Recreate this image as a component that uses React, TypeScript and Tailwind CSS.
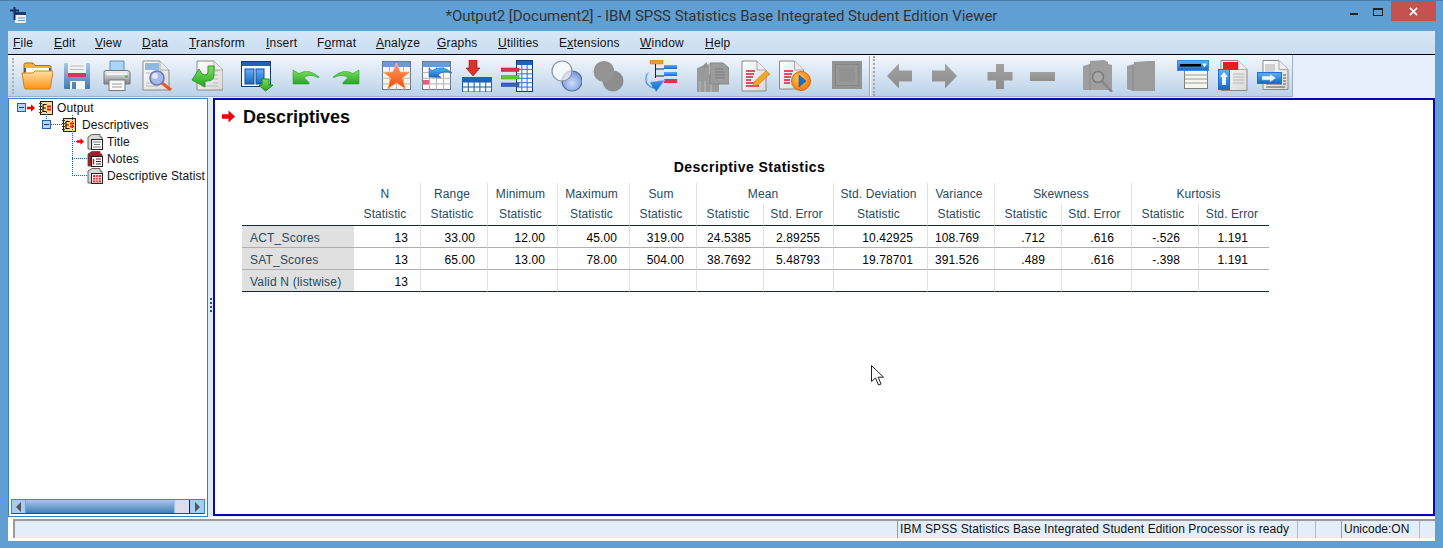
import React from "react";

const S = ({ children, cls = "w-8 h-8", vb = "0 0 32 32" }: { children: React.ReactNode; cls?: string; vb?: string }) => (
  <svg viewBox={vb} className={`flex-none ${cls}`}>{children}</svg>
);

const Defs = () => (
  <svg className="absolute w-0 h-0">
    <defs>
      <linearGradient id="gOr" x1="0" y1="0" x2="0" y2="1"><stop offset="0" stopColor="#ffe0a8" /><stop offset="1" stopColor="#ff9412" /></linearGradient>
      <linearGradient id="gBl" x1="0" y1="0" x2="0" y2="1"><stop offset="0" stopColor="#a8c8e6" /><stop offset="1" stopColor="#3f7bb0" /></linearGradient>
      <linearGradient id="gGr" x1="0" y1="0" x2="0" y2="1"><stop offset="0" stopColor="#7de05a" /><stop offset="1" stopColor="#28a428" /></linearGradient>
      <linearGradient id="gPr" x1="0" y1="0" x2="0" y2="1"><stop offset="0" stopColor="#f4f4f4" /><stop offset="1" stopColor="#7f8487" /></linearGradient>
      <linearGradient id="gPg" x1="0" y1="0" x2="1" y2="1"><stop offset="0" stopColor="#ffffff" /><stop offset="1" stopColor="#d8d8d8" /></linearGradient>
      <linearGradient id="gSt" x1="0" y1="0" x2="0" y2="1"><stop offset="0" stopColor="#ffa060" /><stop offset="1" stopColor="#f04a08" /></linearGradient>
      <linearGradient id="gHd" x1="0" y1="0" x2="0" y2="1"><stop offset="0" stopColor="#5fb0f5" /><stop offset="1" stopColor="#1468c8" /></linearGradient>
      <linearGradient id="gGy" x1="0" y1="0" x2="0" y2="1"><stop offset="0" stopColor="#a2a2a2" /><stop offset="1" stopColor="#8c8c8c" /></linearGradient>
      <radialGradient id="gV" cx="0.5" cy="0.6" r="0.6"><stop offset="0" stopColor="#cfdcf8" /><stop offset="1" stopColor="#6f96dc" /></radialGradient>
      <radialGradient id="gPl" cx="0.4" cy="0.35" r="0.7"><stop offset="0" stopColor="#ffc060" /><stop offset="1" stopColor="#ee7a08" /></radialGradient>
    </defs>
  </svg>
);

const Page = ({ x = 1, y = 1, w = 26, h = 29 }: { x?: number; y?: number; w?: number; h?: number }) => (
  <g>
    <path d={`M${x} ${y}H${x + w - 9}L${x + w} ${y + 9}V${y + h}H${x}Z`} fill="url(#gPg)" stroke="#8a8a8a" strokeWidth="1" />
    <path d={`M${x + w - 9} ${y}V${y + 9}H${x + w}`} fill="#eeeeee" stroke="#a8a8a8" strokeWidth="1" />
  </g>
);

const TableGrid = ({ x, y, w, h, cols, rows, c = "#1a5fb0" }: { x: number; y: number; w: number; h: number; cols: number; rows: number; c?: string }) => (
  <g stroke={c} strokeWidth="1">
    {Array.from({ length: cols - 1 }).map((_, i) => <line key={"c" + i} x1={x + ((i + 1) * w) / cols} x2={x + ((i + 1) * w) / cols} y1={y} y2={y + h} />)}
    {Array.from({ length: rows - 1 }).map((_, i) => <line key={"r" + i} y1={y + ((i + 1) * h) / rows} y2={y + ((i + 1) * h) / rows} x1={x} x2={x + w} />)}
  </g>
);

const Folder = () => (
  <S>
    <path d="M3 7V4.5Q3 3 4.500 3H12L14 5.500H28Q30 5.500 30 7V13H3Z" fill="#f7b23e" stroke="#a8700e" />
    <path d="M3 8H30V12H3Z" fill="#2f62ac" />
    <path d="M5 8H28V14H5Z" fill="#fff" />
    <path d="M1 13L12 13L14 11H32L29.500 27.500Q29.300 29 28 29H5Q3.500 29 3.300 27.500Z" fill="url(#gOr)" stroke="#cf7f14" />
  </S>
);
const Save = () => (
  <S>
    <path d="M4 3H28Q29 3 29 4V28Q29 29 28 29H4Q3 29 3 28V4Q3 3 4 3Z" fill="url(#gBl)" />
    <rect x="7" y="3" width="18" height="14" fill="#f2f2f2" />
    <rect x="7" y="13" width="18" height="4" fill="#d8355c" />
    <path d="M9 6H23M9 9.500H23" stroke="#b4bcc8" />
    <rect x="9" y="21" width="15" height="8" fill="#f4f6f8" />
    <rect x="11" y="22" width="4" height="7" fill="#4f86b8" />
  </S>
);
const Print = () => (
  <S>
    <path d="M9 1H23V13H9Z" fill="#a9d6f8" stroke="#6d8ea8" />
    <path d="M3 12Q3 10.500 6 10.500H26Q29 10.500 29 13V24H3Z" fill="url(#gPr)" stroke="#70767a" />
    <rect x="6" y="13" width="20" height="2" fill="#fff" opacity="0.7" />
    <rect x="24" y="15.500" width="3" height="2" fill="#52c04a" />
    <rect x="8" y="20" width="16" height="10.500" fill="#fafafa" stroke="#777" />
    <path d="M11 24H21M11 27H21" stroke="#9a9a9a" />
  </S>
);
const Preview = () => (
  <S>
    <Page />
    <rect x="3" y="3" width="14" height="7" fill="#8fb9e0" />
    <path d="M4 13H12M4 23H10M4 26H16" stroke="#b8b8b8" />
    <path d="M20 23L29 30" stroke="#e2582a" strokeWidth="3" />
    <circle cx="15" cy="18" r="7" fill="#a8b8ec" stroke="#6b7aa8" strokeWidth="1.600" />
    <circle cx="13" cy="16" r="3" fill="#e0e8fc" />
  </S>
);
const Recall = () => (
  <S>
    <Page x={6} y={1} w={26} h={29} />
    <path d="M17 11H27M20 15H27M22 19H27M22 23H27M10 26H27" stroke="#b8b8b8" />
    <path d="M17 6H23V15Q23 21 16 21H14V27L1 20L8 9L11 14L14 15Q17 15 17 12Z" fill="url(#gGr)" stroke="#2c9a2c" />
  </S>
);
const GoTo = () => (
  <S>
    <rect x="0.500" y="1.500" width="29" height="25" fill="#f6f9fd" stroke="#143a78" />
    <rect x="1" y="2" width="28" height="4" fill="#1f62b8" />
    <rect x="4" y="9" width="9" height="15" fill="url(#gHd)" stroke="#145090" />
    <rect x="15" y="9" width="8" height="15" fill="url(#gHd)" stroke="#145090" />
    <path d="M21 19H28V25H32L24.500 31L18 25H21Z" fill="url(#gGr)" stroke="#1a8a1a" />
  </S>
);
const Undo = () => (
  <S>
    <path d="M3 10L9 13.500Q19 8 29 17Q29 17.500 28 17.500Q20 13.500 14 17.500L19 22.500V24H3Z" fill="url(#gGr)" stroke="#28a030" strokeWidth="0.600" />
  </S>
);
const Redo = () => (
  <S>
    <g transform="matrix(-1 0 0 1 32 0)">
      <path d="M3 10L9 13.500Q19 8 29 17Q29 17.500 28 17.500Q20 13.500 14 17.500L19 22.500V24H3Z" fill="url(#gGr)" stroke="#28a030" strokeWidth="0.600" />
    </g>
  </S>
);
const StarT = () => (
  <S>
    <rect x="1.500" y="1.500" width="28" height="28" fill="#f8f4ec" stroke="#6a7a8a" />
    <rect x="2" y="2" width="27" height="5" fill="#6a9ad8" />
    <TableGrid x={1.500} y={7} w={28} h={22.500} cols={4} rows={4} c="#b8b8b8" />
    <path d="M15.500 3L19.500 12H29L21.500 18L24.500 29L15.500 23L6.500 29L9.500 18L2 12H11.500Z" fill="url(#gSt)" stroke="#f8c8a0" strokeWidth="0.700" />
  </S>
);
const ReT = () => (
  <S>
    <rect x="1.500" y="1.500" width="28" height="28" fill="#fbfbfb" stroke="#6a7a8a" />
    <rect x="2" y="2" width="27" height="5" fill="#6a9ad8" />
    <TableGrid x={1.500} y={7} w={28} h={22.500} cols={4} rows={4} c="#b4b4b4" />
    <rect x="2" y="20" width="6" height="4.500" fill="#ee5a78" />
    <path d="M8 17V8L11 10.500Q21 4 31 13Q22 10 17 15L20 17.500Z" fill="url(#gHd)" stroke="#145090" strokeWidth="0.500" />
  </S>
);
const InsT = () => (
  <S>
    <path d="M8 0H16V8H19L12 16L5 8H8Z" fill="#d8342c" stroke="#8a1c14" strokeWidth="0.600" />
    <rect x="1" y="17" width="30" height="5" fill="#1f62b8" />
    <rect x="1.500" y="22" width="29" height="10" fill="#f2f8ff" stroke="#1a5fb0" />
    <TableGrid x={1.500} y={22} w={29} h={10} cols={5} rows={2} />
  </S>
);
const Vars = () => (
  <S>
    <rect x="15.500" y="0.500" width="16" height="31" fill="#f2f8ff" stroke="#143a78" />
    <rect x="16" y="1" width="15" height="4" fill="#1f62b8" />
    <TableGrid x={15.500} y={5} w={16} h={26.500} cols={3} rows={6} c="#2a78d0" />
    <rect x="0" y="8" width="18" height="3.500" fill="#d8344c" stroke="#a82030" strokeWidth="0.500" />
    <rect x="0" y="15.500" width="18" height="3.500" fill="#66c43a" stroke="#3e9a20" strokeWidth="0.500" />
    <rect x="0" y="23" width="18" height="3.500" fill="#3a5fd0" stroke="#1e3a9a" strokeWidth="0.500" />
  </S>
);
const Venn = () => (
  <S>
    <circle cx="22" cy="21" r="10" fill="url(#gV)" stroke="#5a6f92" strokeWidth="1.200" />
    <circle cx="12" cy="11" r="10" fill="#ffffff" fillOpacity="0.650" stroke="#8a92a0" strokeWidth="1.200" />
  </S>
);
const VennG = () => (
  <S>
    <circle cx="21" cy="21" r="10.500" fill="#8e8e8e" />
    <circle cx="12" cy="11.500" r="10.500" fill="#949494" />
  </S>
);
const TreeI = () => (
  <S>
    <rect x="5" y="0" width="13" height="4" fill="#f09a28" stroke="#c87a10" strokeWidth="0.500" />
    <path d="M10.500 4V18M10.500 9H19M10.500 16H19" stroke="#222" strokeWidth="1" fill="none" />
    <rect x="19" y="5" width="13" height="4" fill="url(#gHd)" />
    <rect x="19" y="12" width="13" height="4" fill="url(#gHd)" />
    <rect x="19" y="19" width="13" height="4" fill="#d8344c" />
    <path d="M4 12Q-2 22 7 27L5 22L20 20L11 32L9.500 29Q-3 26 1 14Z" fill="url(#gHd)" stroke="#a8d0f5" strokeWidth="0.600" />
  </S>
);
const GrayDoc = () => (
  <S>
    <path d="M0 14V32H22V13L16 12L14 16L12 14V4L0 8Z" fill="#9a9a9a" />
    <path d="M3 8L10 2V8Z" fill="#8f8f8f" />
    <path d="M13 3H26L32 8V24H13Z" fill="#9b9b9b" stroke="#878787" />
    <path d="M18 9H26M18 12H28M18 15H28M18 18H28" stroke="#7c7c7c" />
    <path d="M3 21V32M8 21V32M14 24V32" stroke="#bdbdbd" strokeWidth="1" />
  </S>
);
const PenDoc = () => (
  <S>
    <Page x={2} y={1} w={24} h={30} />
    <path d="M6 11H15M6 14H14M6 17H13M6 20H11M6 23H18M6 26H19" stroke="#d41c38" strokeWidth="1.700" />
    <path d="M14 22L26 11L30 14L18 25L13 26Z" fill="#f5a623" stroke="#b87a18" strokeWidth="0.600" />
  </S>
);
const PlayDoc = () => (
  <S>
    <Page x={0.500} y={1} w={24} h={28} />
    <path d="M5 11H14M5 14H13M5 17H12M5 20H11M5 23H11" stroke="#d41c38" strokeWidth="1.700" />
    <circle cx="22" cy="21" r="9.500" fill="url(#gPl)" stroke="#d06c08" />
    <path d="M20 15L27 21L20 27Z" fill="#1f6ec8" stroke="#154a90" strokeWidth="0.500" />
  </S>
);
const Frame = () => (
  <S>
    <rect x="1" y="1" width="30" height="28" fill="#939393" />
    <rect x="4.500" y="4.500" width="23" height="21" fill="#989898" stroke="#858585" />
    <rect x="8" y="8" width="16" height="14" fill="#929292" />
  </S>
);
const ArrowL = () => <S><path d="M3 16L15 3.500V10.500H28V21.500H15V28.500Z" fill="url(#gGy)" /></S>;
const ArrowR = () => <S><path d="M29 16L17 3.500V10.500H4V21.500H17V28.500Z" fill="url(#gGy)" /></S>;
const Plus = () => <S><path d="M12 4H20V12H28.500V20.500H20V29H12V20.500H3.500V12H12Z" fill="url(#gGy)" /></S>;
const Minus = () => <S><rect x="3" y="12" width="25" height="9" fill="url(#gGy)" /></S>;
const GrayMag = () => (
  <S>
    <path d="M1 6L8 4V1L22 0L26 2V4L30 5V30H1Z" fill="#9e9e9e" />
    <path d="M8 4V30" stroke="#8a8a8a" />
    <circle cx="16" cy="17" r="5.500" fill="#a8a8a8" stroke="#7a7a7a" strokeWidth="1.500" />
    <path d="M20 21L30 32" stroke="#868686" strokeWidth="2.500" />
  </S>
);
const GrayBook = () => (
  <S>
    <path d="M2 6L9 4V2L24 1H30V31H8L2 29Z" fill="#9c9c9c" />
    <path d="M8 6V31" stroke="#888888" />
  </S>
);
const ListI = () => (
  <S>
    <rect x="7.500" y="6" width="23" height="22.500" fill="#f6f6f0" stroke="#808080" />
    <path d="M8 15H30M8 19H30M8 23H30" stroke="#9a9a9a" />
    <rect x="0.500" y="0.500" width="31" height="10" fill="url(#gHd)" stroke="#3a8ae0" />
    <rect x="3" y="4" width="21" height="2.500" fill="#000" />
    <path d="M25 3.500H30L27.500 7.500Z" fill="#e8f2ff" />
  </S>
);
const UpDoc = () => (
  <S>
    <Page x={3} y={0.500} w={26} h={30} />
    <rect x="5" y="2" width="15" height="8" fill="#d8241c" />
    <path d="M15 14H26M15 17H26M15 20H26M15 23H26" stroke="#b8b8b8" />
    <rect x="0.500" y="9.500" width="11" height="20" fill="url(#gHd)" stroke="#1a70e0" />
    <path d="M6 12L10 17H8V25H4V17H2Z" fill="#e8f4ff" />
  </S>
);
const RightDoc = () => (
  <S>
    <Page x={6} y={0.500} w={25} h={29} />
    <path d="M8 4H18V14H8Z" fill="#d0d0d0" />
    <path d="M26 15H29M26 18H29M26 21H29M26 24H29M9 24H25M9 27H28" stroke="#555" />
    <rect x="0.500" y="12.500" width="24" height="11" fill="url(#gHd)" stroke="#1a70e0" />
    <path d="M5 16H13V14L19 18L13 22V20H5Z" fill="#e8f4ff" stroke="#7aa8d8" strokeWidth="0.500" />
  </S>
);

const Sep = () => (
  <div className="h-[40px] w-[6px] ml-[6px] flex flex-none">
    <div className="w-[1px] h-full bg-[#8fa6bc]" />
    <div className="w-[1px] h-full bg-white" />
    <div className="w-[2px] ml-[2px] h-full border-l-2 border-dotted border-[#a6a6a6]" />
  </div>
);

const tools: { c: string; I: React.FC }[] = [
  { c: "ml-[7px]", I: Folder }, { c: "ml-[8px]", I: Save }, { c: "ml-[8px]", I: Print }, { c: "ml-[9px]", I: Preview },
  { c: "ml-[17px]", I: Recall }, { c: "ml-[18px]", I: GoTo }, { c: "ml-[17px]", I: Undo }, { c: "ml-[8px]", I: Redo },
  { c: "ml-[19px]", I: StarT }, { c: "ml-[8px]", I: ReT }, { c: "ml-[8px]", I: InsT }, { c: "ml-[8px]", I: Vars },
  { c: "ml-[17px]", I: Venn }, { c: "ml-[10px]", I: VennG }, { c: "ml-[21px]", I: TreeI }, { c: "ml-[20px]", I: GrayDoc },
  { c: "ml-[11px]", I: PenDoc }, { c: "ml-[7px]", I: PlayDoc }, { c: "ml-[20px]", I: Frame },
];
const tools2: { c: string; I: React.FC }[] = [
  { c: "ml-[9px]", I: ArrowL }, { c: "ml-[12px]", I: ArrowR }, { c: "ml-[24px]", I: Plus }, { c: "ml-[11px]", I: Minus },
  { c: "ml-[23px]", I: GrayMag }, { c: "ml-[11px]", I: GrayBook }, { c: "ml-[20px]", I: ListI }, { c: "ml-[9px]", I: UpDoc }, { c: "ml-[7px]", I: RightDoc },
];

const menu: { k: string; pre: string; u: string; post: string; c: string }[] = [
  { k: "File", pre: "", u: "F", post: "ile", c: "w-[41px]" },
  { k: "Edit", pre: "", u: "E", post: "dit", c: "w-[41px]" },
  { k: "View", pre: "", u: "V", post: "iew", c: "w-[47px]" },
  { k: "Data", pre: "", u: "D", post: "ata", c: "w-[47px]" },
  { k: "Transform", pre: "", u: "T", post: "ransform", c: "w-[77px]" },
  { k: "Insert", pre: "", u: "I", post: "nsert", c: "w-[51px]" },
  { k: "Format", pre: "F", u: "o", post: "rmat", c: "w-[59px]" },
  { k: "Analyze", pre: "", u: "A", post: "nalyze", c: "w-[61px]" },
  { k: "Graphs", pre: "", u: "G", post: "raphs", c: "w-[61px]" },
  { k: "Utilities", pre: "", u: "U", post: "tilities", c: "w-[61px]" },
  { k: "Extensions", pre: "E", u: "x", post: "tensions", c: "w-[81px]" },
  { k: "Window", pre: "", u: "W", post: "indow", c: "w-[65px]" },
  { k: "Help", pre: "", u: "H", post: "elp", c: "w-[40px]" },
];

const BookBase = () => (
  <svg viewBox="0 0 14 14" className="w-[14px] h-[14px] flex-none">
    <rect x="1.500" y="0.500" width="12" height="13" fill="#fbdc8c" stroke="#222" />
    <path d="M0 2.500H3M0 5.500H3M0 8.500H3M0 11.500H3" stroke="#333" />
    <path d="M4 3.500H7.500M4 3.500V10.500H7.500M4 7H7" stroke="#111" strokeWidth="1.200" fill="none" />
    <path d="M8 5.500H12M8 8.500H12" stroke="#e01818" strokeWidth="1.800" />
  </svg>
);
const Minusbox = () => (
  <svg viewBox="0 0 9 9" className="w-[9px] h-[9px] flex-none">
    <rect x="0.500" y="0.500" width="8" height="8" fill="#b8d4f0" stroke="#1a5fb0" />
    <path d="M2 4.500H7" stroke="#1a3a70" />
  </svg>
);
const RedArrow = ({ cls }: { cls: string }) => (
  <svg viewBox="0 0 12 12" className={`flex-none ${cls}`}><path d="M0 4H6V0.500L12 6L6 11.500V8H0Z" fill="#f40000" /></svg>
);
const LeafBook = ({ kind }: { kind: "title" | "notes" | "table" }) => (
  <svg viewBox="0 0 16 16" className="w-[16px] h-[16px] flex-none">
    <path d="M1 3L5 0.500H13V3H15V6H5V15H1Z" fill={kind === "notes" ? "#a81c2c" : "#d8d8d8"} stroke="#444" strokeWidth="0.800" />
    <rect x="4.500" y="5.500" width="11" height="10" fill="#fff" stroke="#222" />
    {kind === "title" && <path d="M6 8H14M7 10.500H13M6 13H14" stroke="#777" />}
    {kind === "notes" && <g><path d="M6.500 8V13.500" stroke="#d81818" strokeWidth="1.500" /><path d="M9 8H14M9 10.500H14M9 13H14" stroke="#333" /></g>}
    {kind === "table" && <g><rect x="6" y="7" width="8" height="7.500" fill="#f03030" /><path d="M6 9.500H14M6 12H14M8.700 7V14.500M11.300 7V14.500" stroke="#fff" strokeWidth="0.700" /></g>}
  </svg>
);

const Row = ({ c, children }: { c: string; children: React.ReactNode }) => (
  <div className={`h-[17px] flex items-center whitespace-nowrap ${c}`}>{children}</div>
);

const th1 = "h-[21px] pr-[4px] pt-[2px] pb-[1px] font-normal text-center text-[#264a60] border-r border-[#e0e0e0] align-middle";
const th2 = "h-[22px] pr-[4px] font-normal text-center text-[#264a60] border-r border-[#e0e0e0] border-b border-b-[#152935] align-middle";
const pads = ["pr-[12px]", "pr-[12px]", "pr-[12px]", "pr-[12px]", "pr-[12px]", "pr-[12px]", "pr-[13px]", "pr-[14px]", "pr-[15px]", "pr-[16px]", "pr-[17px]", "pr-[18px]", "pr-[21px]"];
const widths = [112, 67, 67, 70, 72, 67, 67, 70, 94, 67, 67, 70, 67, 70];
const sub = ["Statistic", "Statistic", "Statistic", "Statistic", "Statistic", "Statistic", "Std. Error", "Statistic", "Statistic", "Statistic", "Std. Error", "Statistic", "Std. Error"];
const rows: { n: string; v: string[]; b: string; h: string }[] = [
  { n: "ACT_Scores", v: ["13", "33.00", "12.00", "45.00", "319.00", "24.5385", "2.89255", "10.42925", "108.769", ".712", ".616", "-.526", "1.191"], b: "border-b border-[#aeaeae]", h: "h-[22px]" },
  { n: "SAT_Scores", v: ["13", "65.00", "13.00", "78.00", "504.00", "38.7692", "5.48793", "19.78701", "391.526", ".489", ".616", "-.398", "1.191"], b: "border-b border-[#aeaeae]", h: "h-[22px]" },
  { n: "Valid N (listwise)", v: ["13", "", "", "", "", "", "", "", "", "", "", "", ""], b: "border-b border-[#152935]", h: "h-[22px]" },
];

export default function App() {
  return (
    <div className="relative w-[1443px] h-[548px] overflow-hidden flex flex-col px-[8px] bg-[#5f9fd3] border-t border-[#4a7ea8] font-['Liberation_Sans',sans-serif] text-[12px] text-black">
      <Defs />
      {/* title bar */}
      <div className="h-[30px] grid grid-cols-[1fr_auto_1fr] flex-none -mx-[8px] px-[8px]">
        <div className="flex items-start pt-[6px] pl-[2px]">
          <svg viewBox="0 0 16 16" className="w-[16px] h-[16px]">
            <rect x="5" y="5" width="11" height="11" fill="#e8f0fa" />
            <rect x="5" y="5" width="11" height="3" fill="#1c3a6a" />
            <path d="M8 11H15M8 13.500H15" stroke="#5e9ed2" />
            <path d="M4.500 0V13M0 3.500H9" stroke="#15305c" strokeWidth="2" />
          </svg>
        </div>
        <div className="pt-[5px] text-[15px] leading-[20px] text-[#333] font-['Roboto',sans-serif] tracking-[-0.05px] whitespace-nowrap">*Output2 [Document2] - IBM SPSS Statistics Base Integrated Student Edition Viewer</div>
        <div className="flex justify-end items-start -mr-[1px]">
          <div className="w-[8px] h-[2px] mt-[12px] mr-[15px] bg-[#222]" />
          <div className="w-[10px] h-[8px] mt-[7px] mr-[8px] border border-t-2 border-[#222]" />
          <div className="w-[45px] h-[20px] bg-[#c75050] flex items-center justify-center">
            <svg viewBox="0 0 10 10" className="w-[9px] h-[9px]"><path d="M1 1L9 9M9 1L1 9" stroke="#fff" strokeWidth="1.800" /></svg>
          </div>
        </div>
      </div>
      {/* menu */}
      <div className="h-[23px] flex-none flex items-center pl-[5px] bg-linear-to-b from-[#d7e7f7] to-[#c9ddf2] text-[#111] tracking-[0.2px]">
        {menu.map((m) => (
          <div key={m.k} className={`flex-none ${m.c}`}>{m.pre}<span className="underline">{m.u}</span>{m.post}</div>
        ))}
      </div>
      <div className="h-[1px] bg-black flex-none" />
      {/* toolbar */}
      <div className="h-[43px] flex-none flex bg-[#e5eefa]">
        <div className="w-[1285px] h-[42px] flex items-center bg-linear-to-b from-[#f3f7fd] to-[#bbd2e9] border-b border-r border-[#9cb0c4]">
          <div className="ml-[4px] w-[2px] h-[36px] border-l-2 border-dotted border-[#b0b0b0] flex-none" />
          {tools.map((t, i) => <div key={i} className={`flex-none ${t.c}`}><t.I /></div>)}
          <Sep />
          {tools2.map((t, i) => <div key={i} className={`flex-none ${t.c}`}><t.I /></div>)}
        </div>
      </div>
      {/* panes */}
      <div className="h-[419px] flex-none flex bg-[#e4eefa]">
        <div className="w-[200px] flex-none flex flex-col bg-white border border-[#3a7fc0] overflow-hidden">
          <div className="relative flex-1 text-[12px] text-[#111] tracking-[0.1px]">
            <Row c="pl-[8px]"><Minusbox /><RedArrow cls="w-[8px] h-[8px] ml-[1px]" /><div className="ml-[4px]"><BookBase /></div><span className="ml-[4px]">Output</span></Row>
            <Row c="pl-[33px]"><Minusbox /><div className="w-[11px] h-0 border-t border-dotted border-[#1a5fb0] flex-none" /><BookBase /><span className="ml-[6px]">Descriptives</span></Row>
            <Row c="pl-[63px]"><div className="w-[5px] border-t border-dotted border-[#1a5fb0] flex-none" /><RedArrow cls="w-[7px] h-[7px]" /><div className="ml-[3px]"><LeafBook kind="title" /></div><span className="ml-[4px]">Title</span></Row>
            <Row c="pl-[63px]"><div className="w-[15px] border-t border-dotted border-[#1a5fb0] flex-none" /><LeafBook kind="notes" /><span className="ml-[4px]">Notes</span></Row>
            <Row c="pl-[63px]"><div className="w-[15px] border-t border-dotted border-[#1a5fb0] flex-none" /><LeafBook kind="table" /><span className="ml-[4px]">Descriptive Statist</span></Row>
            <div className="absolute left-[37px] top-[13px] h-[7px] border-l border-dotted border-[#1a5fb0]" />
            <div className="absolute left-[63px] top-[16px] h-[61px] border-l border-dotted border-[#1a5fb0]" />
          </div>
          {/* scrollbar */}
          <div className="h-[15px] mx-[2px] mb-[2px] flex flex-none border border-[#2a8af0] border-b-[#14508c] bg-linear-to-b from-[#a8c8e6] to-[#3f7fb8]">
            <div className="w-[14px] flex-none bg-[#a8cdf2] border-r border-[#5aa8f0] flex items-center justify-center"><div className="w-0 h-0 border-y-[5px] border-y-transparent border-r-[5px] border-r-[#555]" /></div>
            <div className="flex-1" />
            <div className="w-[16px] flex-none bg-[#dcdcea] border-r border-[#222] border-l border-l-[#9cc0e0]" />
            <div className="w-[14px] flex-none bg-[#a8cdf2] flex items-center justify-center"><div className="w-0 h-0 border-y-[5px] border-y-transparent border-l-[5px] border-l-[#555]" /></div>
          </div>
        </div>
        {/* splitter */}
        <div className="w-[5px] flex-none flex flex-col items-center justify-center bg-[#dfeaf7]">
          <div className="w-[2px] h-[14px] -mt-[6px] border-l-2 border-dotted border-[#1c4f90]" />
        </div>
        {/* viewer */}
        <div className="relative flex-1 bg-white border-2 border-[#0a0aa8] mb-[1px] overflow-hidden">
          <div className="flex items-center h-[32px] pt-[1px] pl-[7px]">
            <RedArrow cls="w-[13px] h-[13px]" />
            <span className="ml-[8px] text-[18px] font-bold leading-[22px] text-[#0a0a0a]">Descriptives</span>
          </div>
          <div className="ml-[27px] w-[1027px] mt-[26px]">
            <div className="h-[25px] pr-[12px] text-center text-[14px] font-bold leading-[18px] text-[#010205] tracking-[0.45px]">Descriptive Statistics</div>
            <table className="table-fixed w-[1027px] border-separate border-spacing-0 text-[12px] tracking-[0.1px]">
              <colgroup>
                {widths.map((w, i) => <col key={i} style={{ width: w }} />)}
              </colgroup>
              <thead>
                <tr>
                  <th className="h-[21px]" />
                  {["N", "Range", "Minimum", "Maximum", "Sum"].map((h) => <th key={h} className={th1}>{h}</th>)}
                  <th colSpan={2} className={th1}>Mean</th>
                  <th className={th1}>Std. Deviation</th>
                  <th className={th1}>Variance</th>
                  <th colSpan={2} className={th1}>Skewness</th>
                  <th colSpan={2} className="h-[21px] pr-[4px] pt-[2px] pb-[1px] font-normal text-center text-[#264a60]">Kurtosis</th>
                </tr>
                <tr>
                  <th className="h-[22px] border-b border-[#152935]" />
                  {sub.map((s, i) => (
                    <th key={i} className={i === sub.length - 1 ? "h-[22px] pr-[4px] pb-[2px] font-normal text-center text-[#264a60] border-b border-[#152935]" : `${th2} pb-[2px]`}>{s}</th>
                  ))}
                </tr>
              </thead>
              <tbody>
                {rows.map((r) => (
                  <tr key={r.n}>
                    <td className={`${r.h} ${r.b} pt-[2px] bg-[#e0e0e0] pl-[8px] text-[#264a60] tracking-[0.2px] whitespace-nowrap`}>{r.n}</td>
                    {r.v.map((v, i) => (
                      <td key={i} className={`${r.h} ${r.b} ${pads[i]} pt-[2px] text-right text-[#010205] ${i === r.v.length - 1 ? "" : "border-r border-r-[#e0e0e0]"}`}>{v}</td>
                    ))}
                  </tr>
                ))}
              </tbody>
            </table>
          </div>
          <svg viewBox="0 0 13 21" className="absolute left-[656px] top-[265px] w-[13px] h-[21px]">
            <path d="M0.500 0.500V16.500L4.500 13L7.500 20L10 19L7.200 12.200H12.500Z" fill="#fff" stroke="#222" />
          </svg>
        </div>
      </div>
      {/* status */}
      <div className="flex-1 bg-white flex flex-col pt-[2px] pl-[5px]">
        <div className="h-[19px] flex flex-none bg-[#e4eefa] border-t-2 border-t-[#9a9a9a] text-[#111]">
          <div className="w-[884px] flex-none border-l-2 border-[#9a9a9a]" />
          <div className="w-[400px] flex-none border-l border-[#9a9a9a] pl-[2px] leading-[16px] whitespace-nowrap tracking-[0.08px]">IBM SPSS Statistics Base Integrated Student Edition Processor is ready</div>
          <div className="w-[18px] flex-none border-l border-[#b8b8b8]" />
          <div className="w-[26px] flex-none border-l border-[#b8b8b8]" />
          <div className="w-[78px] flex-none border-l border-[#9a9a9a] pl-[2px] leading-[16px]">Unicode:ON</div>
          <div className="flex-1 border-l border-[#b8b8b8]" />
        </div>
      </div>
      <div className="h-[7px] flex-none" />
    </div>
  );
}
